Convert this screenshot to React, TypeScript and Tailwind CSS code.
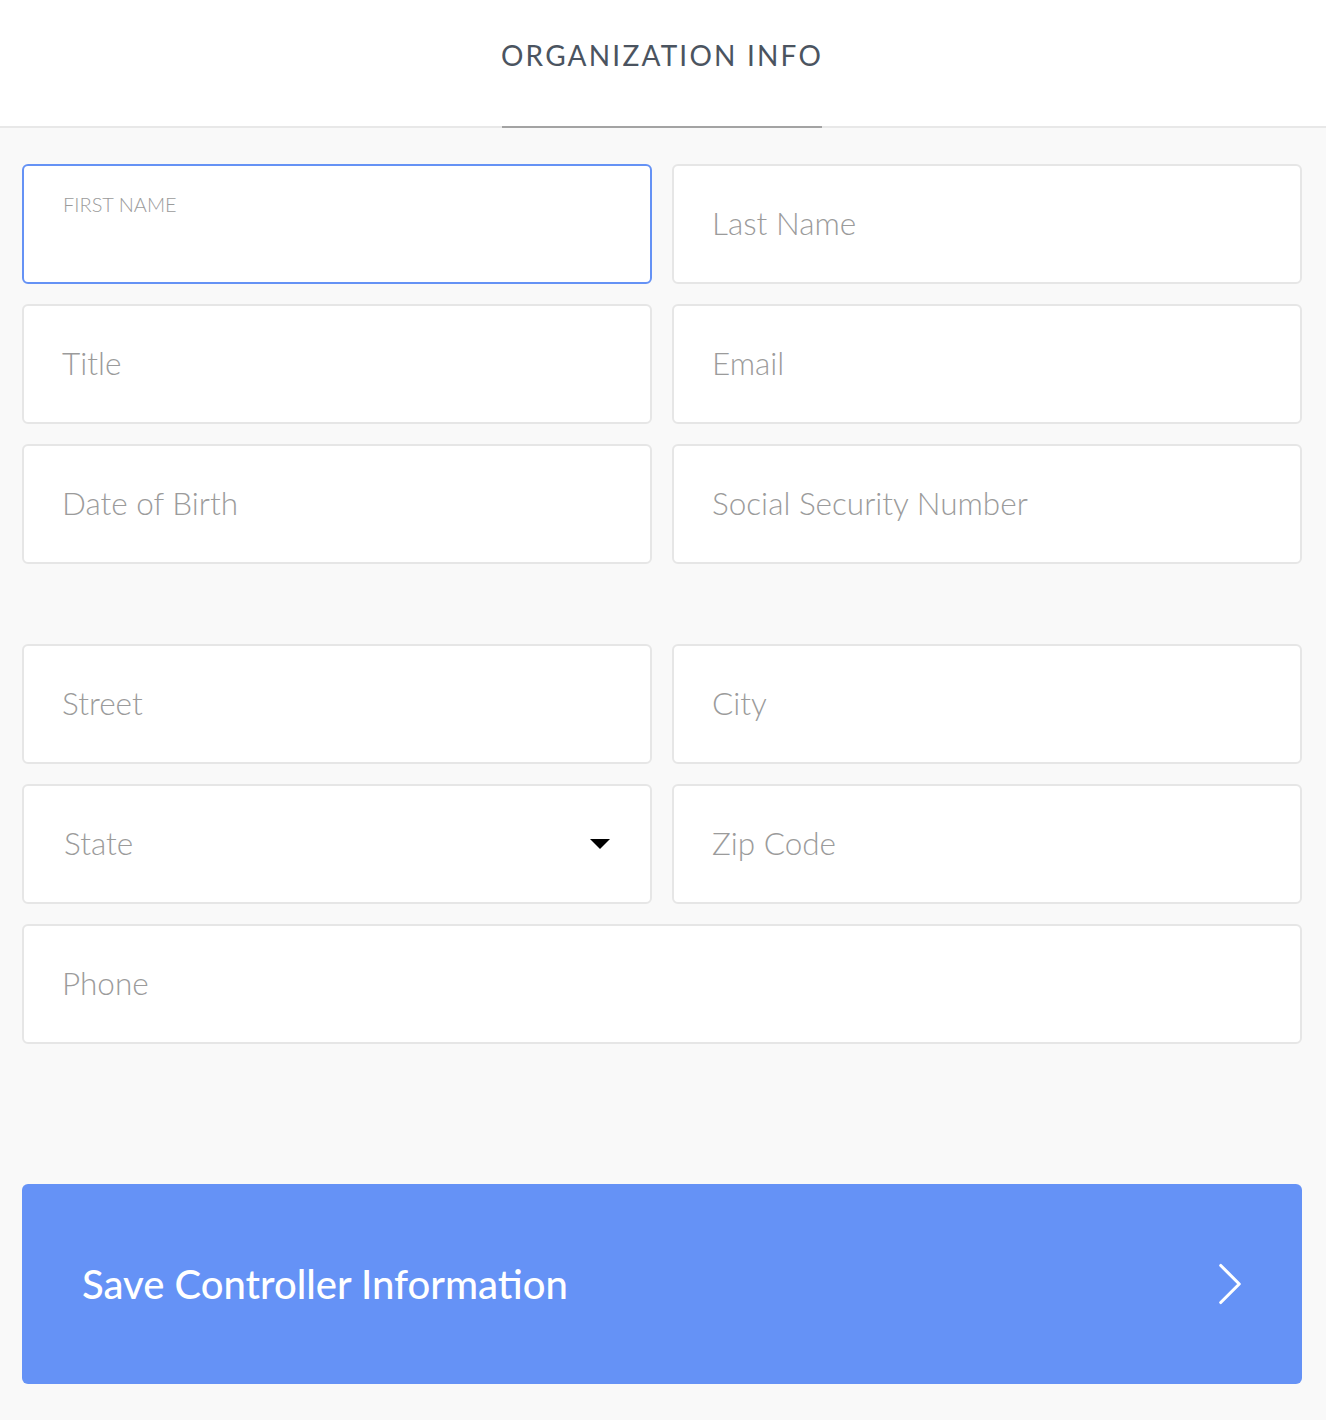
import { ChevronRight } from "lucide-react";

const fieldBox =
  "flex h-[120px] items-center rounded-[6px] border-2 bg-white px-[38px] text-[31.5px] font-light text-[#9b9b9b]";

function Field({ placeholder, className = "" }: { placeholder: string; className?: string }) {
  return (
    <div className={`${fieldBox} border-[#e6e6e6] ${className}`}>
      <span>{placeholder}</span>
    </div>
  );
}

function FocusedField({ label }: { label: string }) {
  return (
    <div className="flex h-[120px] flex-col rounded-[6px] border-2 border-[#6592f5] bg-white px-[39px] pt-[28px]">
      <span className="text-[20px] font-light uppercase leading-none text-[#9b9b9b]">{label}</span>
    </div>
  );
}

function SelectField({ placeholder }: { placeholder: string }) {
  return (
    <div className={`${fieldBox} justify-between border-[#e6e6e6] pl-[40px] pr-[40px]`}>
      <span>{placeholder}</span>
      <svg width="20" height="10" viewBox="0 0 20 10" aria-hidden>
        <path d="M0 0h20L10 10z" fill="#000" />
      </svg>
    </div>
  );
}

export default function App() {
  return (
    <div className="min-h-[1420px] bg-[#f9f9f9] font-['Lato','Noto_Sans',sans-serif]">
      <header className="flex h-[128px] justify-center border-b-2 border-[#e8e8e8] bg-white">
        <div className="relative mr-[2px] flex w-[320px] items-start justify-center pt-[41px]">
          <h1 className="whitespace-nowrap text-[28px] font-normal leading-none tracking-[2.2px] text-[#4b5460]">
            ORGANIZATION INFO
          </h1>
          <span className="absolute bottom-[-2px] left-0 h-[2px] w-full bg-[#a3a3a3]" />
        </div>
      </header>

      <main className="pl-[22px] pr-[24px] pt-[36px] pb-[36px]">
        <div className="grid grid-cols-2 gap-[20px]">
          <FocusedField label="First Name" />
          <Field placeholder="Last Name" />
          <Field placeholder="Title" />
          <Field placeholder="Email" />
          <Field placeholder="Date of Birth" />
          <Field placeholder="Social Security Number" />
        </div>

        <div className="mt-[80px] grid grid-cols-2 gap-[20px]">
          <Field placeholder="Street" />
          <Field placeholder="City" />
          <SelectField placeholder="State" />
          <Field placeholder="Zip Code" />
          <Field placeholder="Phone" className="col-span-2" />
        </div>

        <button
          type="button"
          className="mt-[140px] flex h-[200px] w-full items-center justify-between rounded-[6px] bg-[#6592f6] pl-[60px] pr-[35px] text-white"
        >
          <span className="text-[40px] font-medium">Save Controller Information</span>
          <ChevronRight className="h-[74px] w-[74px]" strokeWidth={1} />
        </button>
      </main>
    </div>
  );
}
